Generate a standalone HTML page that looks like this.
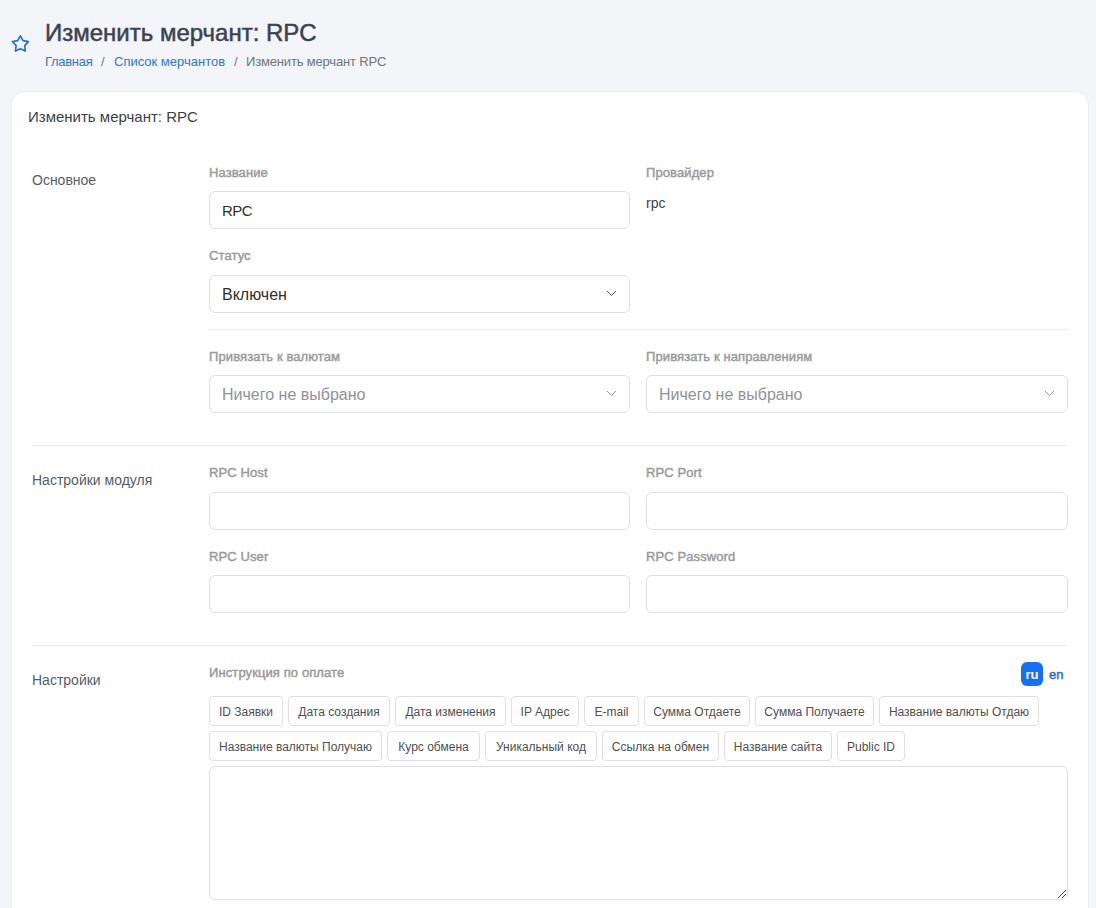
<!DOCTYPE html>
<html><head><meta charset="utf-8">
<style>
*{box-sizing:border-box;margin:0;padding:0}
html,body{width:1096px;height:908px;overflow:hidden;background:#f3f5f9;font-family:"Liberation Sans",sans-serif}
.abs{position:absolute;white-space:nowrap}
.title{left:45px;top:18px;font-size:24px;color:#3a4350;line-height:30px;-webkit-text-stroke:0.5px #3a4350}
.bc{left:45px;top:54px;font-size:13px;line-height:16px;color:#6c757d}
.bc a{color:#3176cf;text-decoration:none}
.bc .sep{color:#6c757d;margin:0 8px 0 7px}
.card{position:absolute;left:12px;top:92px;width:1076px;height:900px;background:#fff;border-radius:13px;box-shadow:0 0 0 1px rgba(20,40,80,.035)}
.chead{left:28px;top:108px;font-size:15px;color:#3b3f44;line-height:18px}
.sec{left:32px;font-size:14px;color:#585d63;line-height:17px}
.lbl{font-size:13px;color:#9a9a9a;line-height:16px;-webkit-text-stroke:0.45px #9a9a9a;letter-spacing:0.1px}
.inp{position:absolute;height:38px;border:1px solid #dee0e3;border-radius:6px;background:#fff;font-size:16px;color:#303030;padding-left:12px;line-height:37px;white-space:nowrap}
.inp.ph{color:#8f9399}
.chev{position:absolute;right:12px;top:14px;width:11px;height:7px}
.hr{position:absolute;height:1px;background:#e7e9ec}
.tag{position:absolute;height:30px;border:1px solid #dee0e3;border-radius:4px;font-size:12px;color:#505050;line-height:31px;text-align:center;white-space:nowrap;top:696px}
.r2{top:731px}
.ru{left:1021px;top:662px;width:22px;height:24px;background:#1570f4;border-radius:6px;color:#fff;font-weight:bold;font-size:13px;text-align:center;line-height:26px}
.en{left:1049px;top:667px;color:#2a6fd3;font-size:13px;line-height:16px;-webkit-text-stroke:0.45px #2a6fd3}
</style></head><body>
<svg class="abs" style="left:0;top:0" width="40" height="60" viewBox="0 0 40 60"><path d="M20.40 35.80 L23.05 40.56 L28.39 41.60 L24.68 45.59 L25.34 51.00 L20.40 48.70 L15.46 51.00 L16.12 45.59 L12.41 41.60 L17.75 40.56 Z" fill="none" stroke="#2173d8" stroke-width="1.7" stroke-linejoin="round"/></svg>
<div class="abs title">Изменить мерчант: RPC</div>
<div class="abs bc" style="letter-spacing:-0.3px"><a>Главная</a></div><div class="abs bc" style="left:101px">/</div><div class="abs bc" style="left:114px"><a>Список мерчантов</a></div><div class="abs bc" style="left:234px">/</div><div class="abs bc" style="left:246px;letter-spacing:-0.17px">Изменить мерчант RPC</div>
<div class="card"></div>
<div class="abs chead">Изменить мерчант: RPC</div>

<div class="abs sec" style="top:172px">Основное</div>
<div class="abs lbl" style="left:209px;top:165px">Название</div>
<div class="inp" style="left:209px;top:191px;width:421px;letter-spacing:-0.6px;font-size:15px">RPC</div>
<div class="abs lbl" style="left:646px;top:165px">Провайдер</div>
<div class="abs" style="left:646px;top:195px;font-size:14px;color:#444;line-height:16px">rpc</div>
<div class="abs lbl" style="left:209px;top:248px">Статус</div>
<div class="inp" style="left:209px;top:275px;width:421px">Включен<svg class="chev" viewBox="0 0 11 7"><path d="M1 1 L5.5 5.5 L10 1" fill="none" stroke="#555" stroke-width="1"/></svg></div>
<div class="hr" style="left:209px;top:329px;width:859px"></div>
<div class="abs lbl" style="left:209px;top:349px">Привязать к валютам</div>
<div class="inp ph" style="left:209px;top:375px;width:421px">Ничего не выбрано<svg class="chev" viewBox="0 0 11 7"><path d="M1 1 L5.5 5.5 L10 1" fill="none" stroke="#9a9a9a" stroke-width="1"/></svg></div>
<div class="abs lbl" style="left:646px;top:349px">Привязать к направлениям</div>
<div class="inp ph" style="left:646px;top:375px;width:422px">Ничего не выбрано<svg class="chev" viewBox="0 0 11 7"><path d="M1 1 L5.5 5.5 L10 1" fill="none" stroke="#9a9a9a" stroke-width="1"/></svg></div>
<div class="hr" style="left:32px;top:445px;width:1036px"></div>

<div class="abs sec" style="top:472px">Настройки модуля</div>
<div class="abs lbl" style="left:209px;top:465px">RPC Host</div>
<div class="inp" style="left:209px;top:492px;width:421px"></div>
<div class="abs lbl" style="left:646px;top:465px">RPC Port</div>
<div class="inp" style="left:646px;top:492px;width:422px"></div>
<div class="abs lbl" style="left:209px;top:549px">RPC User</div>
<div class="inp" style="left:209px;top:575px;width:421px"></div>
<div class="abs lbl" style="left:646px;top:549px">RPC Password</div>
<div class="inp" style="left:646px;top:575px;width:422px"></div>
<div class="hr" style="left:32px;top:645px;width:1036px"></div>

<div class="abs sec" style="top:672px">Настройки</div>
<div class="abs lbl" style="left:209px;top:665px">Инструкция по оплате</div>
<div class="abs ru">ru</div>
<div class="abs en">en</div>
<div class="tag" style="left:209px;width:74px">ID Заявки</div>
<div class="tag" style="left:288px;width:102px">Дата создания</div>
<div class="tag" style="left:395px;width:111px">Дата изменения</div>
<div class="tag" style="left:511px;width:68px">IP Адрес</div>
<div class="tag" style="left:584px;width:55px">E-mail</div>
<div class="tag" style="left:644px;width:106px">Сумма Отдаете</div>
<div class="tag" style="left:755px;width:119px">Сумма Получаете</div>
<div class="tag" style="left:879px;width:160px">Название валюты Отдаю</div>
<div class="tag r2" style="left:209px;width:173px">Название валюты Получаю</div>
<div class="tag r2" style="left:387px;width:93px">Курс обмена</div>
<div class="tag r2" style="left:485px;width:112px">Уникальный код</div>
<div class="tag r2" style="left:602px;width:117px">Ссылка на обмен</div>
<div class="tag r2" style="left:724px;width:108px">Название сайта</div>
<div class="tag r2" style="left:837px;width:68px">Public ID</div>
<div class="inp" style="left:209px;top:766px;width:859px;height:134px"><svg style="position:absolute;right:0;bottom:0" width="11" height="11" viewBox="0 0 11 11"><path d="M10 2 L2 10 M10 6 L6 10" stroke="#555" stroke-width="1"/></svg></div>
</body></html>
